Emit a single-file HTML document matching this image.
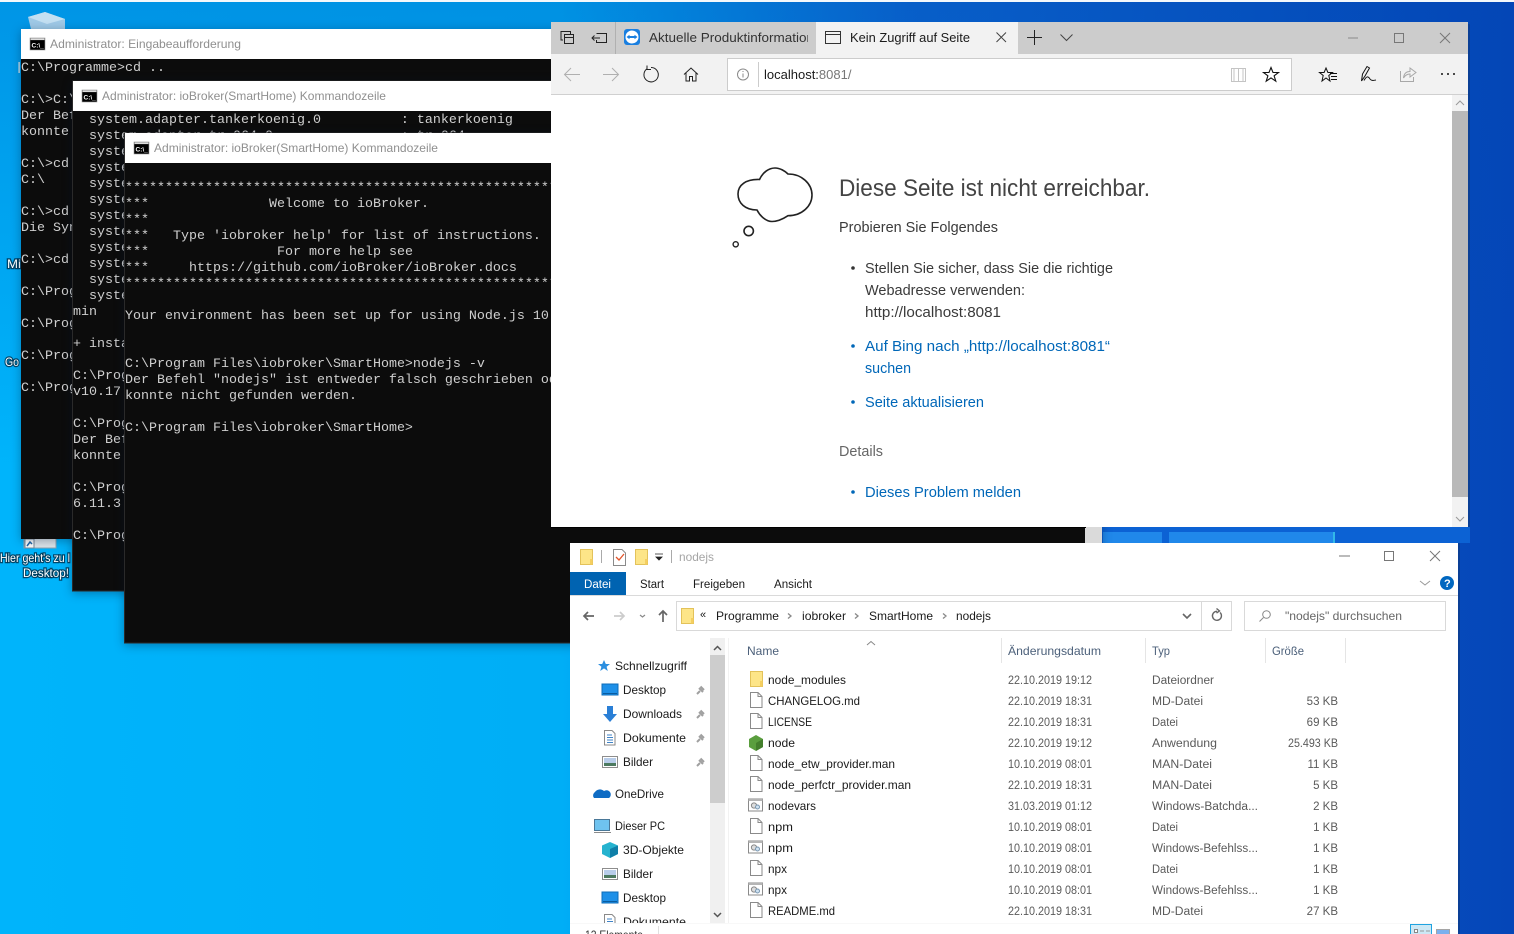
<!DOCTYPE html>
<html lang="de"><head><meta charset="utf-8"><title>Desktop</title>
<style>
html,body{margin:0;padding:0;width:1514px;height:934px;overflow:hidden;background:#0090e8}
svg{display:block}
text{font-family:"Liberation Sans",sans-serif;white-space:pre}
.m text,text.m{font-family:"Liberation Mono",monospace;font-size:13.33px;fill:#cfcfcf}
.t{font-size:12px;fill:#8f8f8f}
.f text{font-size:12px;fill:#1a1a1a}
.g text{font-size:11.5px;fill:#5a5a5a}
.p{font-size:14.6px;fill:#3a3a3a}
.l{font-size:14.6px;fill:#0067b8}
.d{font-size:12px;fill:#fff;paint-order:stroke;stroke:#00243c;stroke-width:2.5px;stroke-opacity:.75}
.i{fill:none;stroke:#333;stroke-width:1}
.sh{filter:drop-shadow(0 2px 5px rgba(0,20,50,.35))}
</style></head><body>
<svg xmlns="http://www.w3.org/2000/svg" width="1514" height="934" viewBox="0 0 1514 934">
<defs>
<linearGradient id="h" x1="0" x2="1" y1="0" y2="0"><stop offset="0" stop-color="#00b4fb"/><stop offset=".37" stop-color="#00aef6"/><stop offset=".6" stop-color="#0a68d2"/><stop offset="1" stop-color="#0546b8"/></linearGradient>
<linearGradient id="v" x1="0" x2="0" y1="0" y2="1"><stop offset="0" stop-color="#0046b0" stop-opacity=".28"/><stop offset=".5" stop-color="#0046b0" stop-opacity="0"/></linearGradient>
<g id="c"><rect x="0" y="0" width="15" height="12" fill="#000" stroke="#999" stroke-width=".6"/><rect x=".5" y=".3" width="14" height="1.8" fill="#ddd"/><text x="1.5" y="9.5" style="font-size:6.5px;fill:#fff;font-weight:bold">C:\_</text></g>
<g id="fo"><path d="M.5 .5H12.5V15.5H.5Z" fill="#fde588" stroke="#e3c25a"/><path d="M10 10H12.5V15.5H10Z" fill="#f5cf60"/></g>
<g id="fi"><path d="M.5 .5H8L12 4.5V15.5H.5Z" fill="#fff" stroke="#8a8a8a"/><path d="M8 .5V4.5H12" fill="none" stroke="#8a8a8a"/></g>
<g id="ba"><rect x=".5" y="1" width="14" height="12" fill="#fff" stroke="#8a8a8a"/><rect x=".5" y="1" width="14" height="2" fill="#b5b5b5"/><circle cx="6" cy="7.5" r="2.6" fill="#ddd" stroke="#888"/><circle cx="9.5" cy="9" r="2" fill="#cfe2f2" stroke="#7a97b0"/></g>
<g id="pin"><path d="M2 9L5 6M4 3L8 7M5.5 1.5L9 5" fill="none" stroke="#a0a0a0" stroke-width="2"/></g>
<g id="de"><rect x="0" y="1" width="16" height="11" fill="#1e90e8" stroke="#0f6db8"/><rect x="1" y="10" width="14" height="1" fill="#0a5ca0"/></g>
<g id="pi"><rect x=".5" y=".5" width="15" height="11" fill="#fff" stroke="#8d8d8d"/><rect x="2" y="2" width="12" height="5" fill="#b8cdea"/><rect x="2" y="7" width="12" height="3" fill="#4d7a60"/></g>
<g id="doc"><path d="M.5 .5H8L11 3.5V15H.5Z" fill="#fff" stroke="#8a8a8a"/><path d="M3 5H8M3 7.5H9M3 10H9M3 12.5H9" stroke="#3f83c7"/></g>
</defs>

<!-- wallpaper -->
<rect width="1514" height="934" fill="url(#h)"/>
<rect width="1514" height="934" fill="url(#v)"/>
<rect width="1514" height="2" fill="#f4f8fb"/>
<rect x="1102" y="527" width="368" height="16" fill="#0c62d4"/>
<rect x="1103" y="532" width="59" height="11" fill="#2088ea"/>
<rect x="1169" y="532" width="165" height="11" fill="#2088ea"/>
<rect x="1333" y="532" width="2" height="11" fill="#32b8e8"/>

<!-- desktop icons -->
<path d="M28 17L45 12L65 19V29H31Z" fill="#9fc9e6"/><path d="M28 17L45 12L65 19L47 24Z" fill="#c4e0f2"/>
<rect x="24" y="538" width="32" height="10" fill="#dfe6ea" stroke="#8ea3b0"/><rect x="25" y="539" width="9" height="9" fill="#fff" stroke="#7a8c9a"/><path d="M27 546l3-4 2 2" stroke="#2468a8" fill="none" stroke-width="1.5"/>
<text class="d" x="7" y="268" textLength="14" lengthAdjust="spacingAndGlyphs">Mi</text>
<text class="d" x="5" y="366" textLength="14" lengthAdjust="spacingAndGlyphs">Go</text>
<text class="d" x="0" y="562" textLength="70" lengthAdjust="spacingAndGlyphs">Hier geht's zu l</text>
<text class="d" x="23" y="577" textLength="46" lengthAdjust="spacingAndGlyphs">Desktop!</text>
<rect x="18.500" y="62" width="1.200" height="11" fill="#e8e8e8"/>

<!-- console 1 -->
<rect class="sh" x="21" y="29" width="700" height="510" fill="#0c0c0c"/><rect x="21" y="29" width="700" height="30" fill="#fff"/>
<use href="#c" x="30" y="38"/>
<text class="t" x="50" y="48" textLength="191" lengthAdjust="spacingAndGlyphs">Administrator: Eingabeaufforderung</text>
<g class="m">
<text x="21" y="71">C:\Programme&gt;cd ..</text>
<text x="21" y="103">C:\&gt;C:\Program</text>
<text x="21" y="119">Der Befehl</text>
<text x="21" y="135">konnte nicht</text>
<text x="21" y="167">C:\&gt;cd \</text>
<text x="21" y="183">C:\</text>
<text x="21" y="215">C:\&gt;cd Program</text>
<text x="21" y="231">Die Syntax</text>
<text x="21" y="263">C:\&gt;cd Program</text>
<text x="21" y="295">C:\Programme</text>
<text x="21" y="327">C:\Programme</text>
<text x="21" y="359">C:\Programme</text>
<text x="21" y="391">C:\Programme</text>
</g>

<!-- console 2 -->
<rect class="sh" x="72.5" y="81" width="700" height="510" fill="#0c0c0c" stroke="#2a2a2a"/><rect x="73" y="81" width="700" height="30" fill="#fff"/>
<use href="#c" x="82" y="90"/>
<text class="t" x="102" y="100" textLength="284" lengthAdjust="spacingAndGlyphs">Administrator: ioBroker(SmartHome) Kommandozeile</text>
<g class="m">
<text x="73" y="123">  system.adapter.tankerkoenig.0          : tankerkoenig</text>
<text x="73" y="139">  system.adapter.tr-064.0                : tr-064</text>
<text x="73" y="155">  system</text><text x="73" y="171">  system</text><text x="73" y="187">  system</text><text x="73" y="203">  system</text><text x="73" y="219">  system</text><text x="73" y="235">  system</text><text x="73" y="251">  system</text><text x="73" y="267">  system</text><text x="73" y="283">  system</text><text x="73" y="299">  system</text>
<text x="73" y="315">min</text>
<text x="73" y="347">+ instance</text>
<text x="73" y="379">C:\Program</text>
<text x="73" y="395">v10.17.0</text>
<text x="73" y="427">C:\Program</text>
<text x="73" y="443">Der Befehl</text>
<text x="73" y="459">konnte nicht</text>
<text x="73" y="491">C:\Program</text>
<text x="73" y="507">6.11.3</text>
<text x="73" y="539">C:\Program</text>
</g>

<!-- console 3 -->
<rect class="sh" x="124.5" y="133" width="977" height="510" fill="#0c0c0c" stroke="#2a2a2a"/><rect x="125" y="133" width="977" height="30" fill="#fff"/>
<rect x="1085" y="163" width="17" height="480" fill="#dadada"/>
<use href="#c" x="134" y="142"/>
<text class="t" x="154" y="152" textLength="284" lengthAdjust="spacingAndGlyphs">Administrator: ioBroker(SmartHome) Kommandozeile</text>
<g class="m">
<text x="125" y="191">****************************************************************</text>
<text x="125" y="207">***             </text><text x="269" y="207">Welcome to ioBroker.</text>
<text x="125" y="223">***</text>
<text x="125" y="239">***</text><text x="173" y="239">Type 'iobroker help' for list of instructions.</text>
<text x="125" y="255">***</text><text x="277" y="255">For more help see</text>
<text x="125" y="271">***</text><text x="189" y="271">https://github.com/ioBroker/ioBroker.docs</text>
<text x="125" y="287">****************************************************************</text>
<text x="125" y="319">Your environment has been set up for using Node.js 10.17.0 (x64)</text>
<text x="125" y="367">C:\Program Files\iobroker\SmartHome&gt;nodejs -v</text>
<text x="125" y="383">Der Befehl "nodejs" ist entweder falsch geschrieben oder</text>
<text x="125" y="399">konnte nicht gefunden werden.</text>
<text x="125" y="431">C:\Program Files\iobroker\SmartHome&gt;</text>
</g>

<!-- explorer -->
<rect x="1458" y="543" width="2" height="391" fill="#0a3f96"/>
<rect x="570" y="543" width="888" height="391" fill="#fff"/>
<use href="#fo" x="580" y="549"/>
<rect x="601" y="550" width="1" height="13" fill="#aaa"/>
<path d="M613.5 549.5H622L625.5 553V565.5H613.5Z" fill="#fff" stroke="#8a8a8a"/><path d="M616 557l3 3 5-6" fill="none" stroke="#e2552b" stroke-width="1.3"/>
<use href="#fo" x="635" y="549"/>
<path d="M655 554h8M656 557h6l-3 3z" fill="#222" stroke="#222" stroke-width=".8"/>
<rect x="671" y="550" width="1" height="13" fill="#aaa"/>
<text x="679" y="561" textLength="35" lengthAdjust="spacingAndGlyphs" style="font-size:12px;fill:#a5a5a5">nodejs</text>
<path d="M1339 556H1350" stroke="#777"/><rect x="1384.500" y="551.500" width="9" height="9" fill="none" stroke="#777"/><path d="M1430 551L1440 561M1440 551L1430 561" stroke="#777"/>
<rect x="570" y="572" width="56" height="23" fill="#0063b1"/>
<text x="584" y="588" textLength="27" lengthAdjust="spacingAndGlyphs" style="font-size:11.500px;fill:#fff">Datei</text>
<g class="f"><text x="640" y="588" textLength="24" lengthAdjust="spacingAndGlyphs" style="font-size:11.500px">Start</text><text x="693" y="588" textLength="52" lengthAdjust="spacingAndGlyphs" style="font-size:11.500px">Freigeben</text><text x="774" y="588" textLength="38" lengthAdjust="spacingAndGlyphs" style="font-size:11.500px">Ansicht</text></g>
<rect x="570" y="595" width="888" height="1" fill="#dadada"/>
<path d="M1420 581l5 4 5-4" fill="none" stroke="#999"/>
<circle cx="1447" cy="583" r="7" fill="#0067c0"/><text x="1444" y="587" style="font-size:11px;font-weight:bold;fill:#fff">?</text>
<path d="M594 616H584M588 612L584 616L588 620" fill="none" stroke="#666" stroke-width="1.700"/>
<path d="M614 616H624M620 612L624 616L620 620" fill="none" stroke="#ccc" stroke-width="1.700"/>
<path d="M640 615l2.500 2 2.500-2" fill="none" stroke="#888" stroke-width="1.200"/>
<path d="M663 622V611M659 615L663 611L667 615" fill="none" stroke="#666" stroke-width="1.700"/>
<rect x="676.500" y="601.500" width="555" height="29" fill="#fff" stroke="#d9d9d9"/><rect x="1201" y="602" width="1" height="28" fill="#d9d9d9"/>
<use href="#fo" x="681" y="608"/>
<g class="f"><text x="700" y="618" style="font-size:11px">«</text>
<text x="716" y="620" textLength="63" lengthAdjust="spacingAndGlyphs">Programme</text>
<text x="802" y="620" textLength="44" lengthAdjust="spacingAndGlyphs">iobroker</text>
<text x="869" y="620" textLength="64" lengthAdjust="spacingAndGlyphs">SmartHome</text>
<text x="956" y="620" textLength="35" lengthAdjust="spacingAndGlyphs">nodejs</text></g>
<path d="M788 613.500l3 2.500-3 2.500M855 613.500l3 2.500-3 2.500M943 613.500l3 2.500-3 2.500" fill="none" stroke="#888" stroke-width="1.300"/>
<path d="M1183 614l4 4 4-4" fill="none" stroke="#666" stroke-width="1.600"/>
<path d="M1220 612.500a4.500 4.500 0 1 1-3-1.200M1216.500 608.500l3 2.500-3 2" fill="none" stroke="#666" stroke-width="1.400"/>
<rect x="1244.500" y="601.500" width="201" height="29" fill="#fff" stroke="#d9d9d9"/>
<circle cx="1266.500" cy="614.500" r="3.800" fill="none" stroke="#888"/><path d="M1263.500 617.500L1259.500 621.500" stroke="#888"/>
<text x="1285" y="620" textLength="117" lengthAdjust="spacingAndGlyphs" style="font-size:12px;fill:#666">"nodejs" durchsuchen</text>
<path d="M867 645l4-3.500 4 3.500" fill="none" stroke="#888"/>
<text x="747" y="655" textLength="32" lengthAdjust="spacingAndGlyphs" style="font-size:12px;fill:#4c607a">Name</text><text x="1008" y="655" textLength="93" lengthAdjust="spacingAndGlyphs" style="font-size:12px;fill:#4c607a">Änderungsdatum</text><text x="1152" y="655" textLength="18" lengthAdjust="spacingAndGlyphs" style="font-size:12px;fill:#4c607a">Typ</text><text x="1272" y="655" textLength="32" lengthAdjust="spacingAndGlyphs" style="font-size:12px;fill:#4c607a">Größe</text>
<path d="M1001.500 638V663M1145.500 638V663M1265.500 638V663M1345.500 638V663" stroke="#e5e5e5"/>
<!-- nav scrollbar -->
<rect x="710" y="638" width="15" height="285" fill="#f0f0f0"/><rect x="710" y="655" width="15" height="148" fill="#cdcdcd"/>
<path d="M714 650l3.500-3.500 3.500 3.500M714 913l3.500 3.500 3.500-3.500" fill="none" stroke="#555" stroke-width="1.500"/>
<rect x="728" y="638" width="1" height="285" fill="#f2f2f2"/>
<!-- nav tree -->
<path d="M604 660l1.800 4h4.200l-3.400 2.700 1.200 4.300-3.800-2.600-3.800 2.600 1.200-4.300-3.400-2.700h4.200z" fill="#2b8fe0"/>
<use href="#de" x="602" y="683"/>
<path d="M607 706h6v8h4l-7 8-7-8h4z" fill="#2a7fd6"/>
<use href="#doc" x="604" y="730"/>
<use href="#pi" x="602" y="756"/>
<path d="M594 798a4 4 0 0 1 1-6 6 6 0 0 1 9-1 4 4 0 0 1 5 7z" fill="#0f6cc4"/>
<rect x="594.500" y="819.500" width="15" height="11" fill="#6fc3ef" stroke="#4a7898"/><rect x="594" y="832" width="17" height="1" fill="#8a8a8a"/>
<path d="M610 842l8 3.500v8.500l-8 4-8-4v-8.500z" fill="#26b3cf"/><path d="M610 849l8-3.500v8.500l-8 4z" fill="#0f7fa8"/>
<use href="#pi" x="602" y="868"/>
<use href="#de" x="602" y="891"/>
<use href="#doc" x="604" y="914"/>
<use href="#pin" x="695" y="685"/><use href="#pin" x="695" y="709"/><use href="#pin" x="695" y="733"/><use href="#pin" x="695" y="757"/>
<g class="f">
<text x="615" y="670" textLength="72" lengthAdjust="spacingAndGlyphs">Schnellzugriff</text>
<text x="623" y="694" textLength="43" lengthAdjust="spacingAndGlyphs">Desktop</text>
<text x="623" y="718" textLength="59" lengthAdjust="spacingAndGlyphs">Downloads</text>
<text x="623" y="742" textLength="63" lengthAdjust="spacingAndGlyphs">Dokumente</text>
<text x="623" y="766" textLength="30" lengthAdjust="spacingAndGlyphs">Bilder</text>
<text x="615" y="798" textLength="49" lengthAdjust="spacingAndGlyphs">OneDrive</text>
<text x="615" y="830" textLength="50" lengthAdjust="spacingAndGlyphs">Dieser PC</text>
<text x="623" y="854" textLength="61" lengthAdjust="spacingAndGlyphs">3D-Objekte</text>
<text x="623" y="878" textLength="30" lengthAdjust="spacingAndGlyphs">Bilder</text>
<text x="623" y="902" textLength="43" lengthAdjust="spacingAndGlyphs">Desktop</text>
<text x="623" y="926" textLength="63" lengthAdjust="spacingAndGlyphs">Dokumente</text>
</g>
<rect x="570" y="924" width="140" height="10" fill="#fff"/>
<rect x="570" y="923" width="888" height="1" fill="#f8f8f8"/>
<text x="585" y="939" textLength="58" lengthAdjust="spacingAndGlyphs" style="font-size:12px;fill:#333">12 Elemente</text>
<rect x="658" y="926" width="1" height="8" fill="#e0e0e0"/>
<!-- files -->
<use href="#fo" x="750" y="671"/><use href="#fi" x="750" y="692"/><use href="#fi" x="750" y="713"/>
<path d="M756 735l7 4v8l-7 4-7-4v-8z" fill="#5a9e3e"/><path d="M756 743l7-4v8l-7 4z" fill="#437f2c"/>
<use href="#fi" x="750" y="755"/><use href="#fi" x="750" y="776"/><use href="#ba" x="748" y="798"/><use href="#fi" x="750" y="818"/><use href="#ba" x="748" y="840"/><use href="#fi" x="750" y="860"/><use href="#ba" x="748" y="882"/><use href="#fi" x="750" y="902"/>
<g class="f">
<text x="768" y="684" textLength="78" lengthAdjust="spacingAndGlyphs">node_modules</text>
<text x="768" y="705" textLength="92" lengthAdjust="spacingAndGlyphs">CHANGELOG.md</text>
<text x="768" y="726" textLength="44" lengthAdjust="spacingAndGlyphs">LICENSE</text>
<text x="768" y="747" textLength="27" lengthAdjust="spacingAndGlyphs">node</text>
<text x="768" y="768" textLength="127" lengthAdjust="spacingAndGlyphs">node_etw_provider.man</text>
<text x="768" y="789" textLength="143" lengthAdjust="spacingAndGlyphs">node_perfctr_provider.man</text>
<text x="768" y="810" textLength="48" lengthAdjust="spacingAndGlyphs">nodevars</text>
<text x="768" y="831" textLength="25" lengthAdjust="spacingAndGlyphs">npm</text>
<text x="768" y="852" textLength="25" lengthAdjust="spacingAndGlyphs">npm</text>
<text x="768" y="873" textLength="19" lengthAdjust="spacingAndGlyphs">npx</text>
<text x="768" y="894" textLength="19" lengthAdjust="spacingAndGlyphs">npx</text>
<text x="768" y="915" textLength="67" lengthAdjust="spacingAndGlyphs">README.md</text>
</g>
<g class="g">
<text x="1008" y="684" textLength="84" lengthAdjust="spacingAndGlyphs">22.10.2019 19:12</text>
<text x="1008" y="705" textLength="84" lengthAdjust="spacingAndGlyphs">22.10.2019 18:31</text>
<text x="1008" y="726" textLength="84" lengthAdjust="spacingAndGlyphs">22.10.2019 18:31</text>
<text x="1008" y="747" textLength="84" lengthAdjust="spacingAndGlyphs">22.10.2019 19:12</text>
<text x="1008" y="768" textLength="84" lengthAdjust="spacingAndGlyphs">10.10.2019 08:01</text>
<text x="1008" y="789" textLength="84" lengthAdjust="spacingAndGlyphs">22.10.2019 18:31</text>
<text x="1008" y="810" textLength="84" lengthAdjust="spacingAndGlyphs">31.03.2019 01:12</text>
<text x="1008" y="831" textLength="84" lengthAdjust="spacingAndGlyphs">10.10.2019 08:01</text>
<text x="1008" y="852" textLength="84" lengthAdjust="spacingAndGlyphs">10.10.2019 08:01</text>
<text x="1008" y="873" textLength="84" lengthAdjust="spacingAndGlyphs">10.10.2019 08:01</text>
<text x="1008" y="894" textLength="84" lengthAdjust="spacingAndGlyphs">10.10.2019 08:01</text>
<text x="1008" y="915" textLength="84" lengthAdjust="spacingAndGlyphs">22.10.2019 18:31</text>
<text x="1152" y="684" textLength="62" lengthAdjust="spacingAndGlyphs">Dateiordner</text>
<text x="1152" y="705" textLength="51" lengthAdjust="spacingAndGlyphs">MD-Datei</text>
<text x="1152" y="726" textLength="26" lengthAdjust="spacingAndGlyphs">Datei</text>
<text x="1152" y="747" textLength="65" lengthAdjust="spacingAndGlyphs">Anwendung</text>
<text x="1152" y="768" textLength="60" lengthAdjust="spacingAndGlyphs">MAN-Datei</text>
<text x="1152" y="789" textLength="60" lengthAdjust="spacingAndGlyphs">MAN-Datei</text>
<text x="1152" y="810" textLength="106" lengthAdjust="spacingAndGlyphs">Windows-Batchda...</text>
<text x="1152" y="831" textLength="26" lengthAdjust="spacingAndGlyphs">Datei</text>
<text x="1152" y="852" textLength="106" lengthAdjust="spacingAndGlyphs">Windows-Befehlss...</text>
<text x="1152" y="873" textLength="26" lengthAdjust="spacingAndGlyphs">Datei</text>
<text x="1152" y="894" textLength="106" lengthAdjust="spacingAndGlyphs">Windows-Befehlss...</text>
<text x="1152" y="915" textLength="51" lengthAdjust="spacingAndGlyphs">MD-Datei</text>
</g>
<g class="g" text-anchor="end">
<text x="1338" y="705">53 KB</text><text x="1338" y="726">69 KB</text><text x="1338" y="747" textLength="50" lengthAdjust="spacingAndGlyphs">25.493 KB</text><text x="1338" y="768">11 KB</text><text x="1338" y="789">5 KB</text><text x="1338" y="810">2 KB</text><text x="1338" y="831">1 KB</text><text x="1338" y="852">1 KB</text><text x="1338" y="873">1 KB</text><text x="1338" y="894">1 KB</text><text x="1338" y="915">27 KB</text>
</g>
<rect x="1410.500" y="924.500" width="21" height="12" fill="#cce8f5" stroke="#1fa3e0"/>
<rect x="1414.500" y="929.500" width="3" height="3" fill="#fff" stroke="#888"/><path d="M1420 931h4M1426 931h4" stroke="#999"/>
<rect x="1436.500" y="929.500" width="13" height="8" fill="#7ab0ee" stroke="#a5a5a5"/>

<!-- browser -->
<rect x="1468" y="24" width="2" height="503" fill="#0a3f96"/>
<rect x="551" y="22" width="917" height="505" fill="#fff"/>
<rect x="551" y="527" width="535" height="1" fill="#000"/>
<rect x="551" y="22" width="917" height="32" fill="#cccccc"/>
<rect x="816" y="22" width="202" height="32" fill="#f2f2f2"/>
<rect x="615" y="22" width="1" height="32" fill="#b0b0b0"/>
<rect x="551" y="54" width="917" height="40" fill="#f2f2f2"/>
<rect x="551" y="94" width="917" height="1" fill="#d0d0d0"/>
<!-- tab bar icons -->
<path d="M561 34V31.500H570.500V34M561 31.500V40H563" class="i" style="stroke:#222"/><rect x="564.500" y="34.500" width="9" height="9" fill="none" stroke="#222"/><path d="M564.500 37.500H573.500" stroke="#222"/>
<path d="M596.500 33.500H606.500V42.500H596.500V40M592 38H600M594.500 35.500L592 38L594.500 40.500" class="i" style="stroke:#222"/>
<rect x="624" y="29" width="16" height="16" rx="3" fill="#1a7fe0"/><circle cx="632" cy="37" r="6.500" fill="#fff"/><path d="M626.500 37l3-2.200v1.200h5v-1.200l3 2.200-3 2.200v-1.200h-5v1.200z" fill="#1a7fe0"/>
<svg x="649" y="28" width="159" height="20"><text x="0" y="14" textLength="165" lengthAdjust="spacingAndGlyphs" style="font-size:13px;fill:#333">Aktuelle Produktinformation</text></svg>
<rect x="825.500" y="31.500" width="15" height="12" fill="none" stroke="#333"/><path d="M825.500 34.500H840.500" stroke="#333"/>
<text x="850" y="42" textLength="120" lengthAdjust="spacingAndGlyphs" style="font-size:13px;fill:#1a1a1a">Kein Zugriff auf Seite</text>
<path d="M996.500 32.500L1006 42M1006 32.500L996.500 42" stroke="#444"/>
<path d="M1034.500 30V45M1027 37.500H1042" stroke="#222"/>
<path d="M1060.500 34.500L1066.500 40.500L1072.500 34.500" fill="none" stroke="#444"/>
<path d="M1348 38H1358" stroke="#8a8a8a"/><rect x="1394.500" y="33.500" width="9" height="9" fill="none" stroke="#777"/><path d="M1440 33L1450 43M1450 33L1440 43" stroke="#777"/>
<!-- toolbar -->
<path d="M580 74.500H564.500M571 68L564.500 74.500L571 81" fill="none" stroke="#b0b0b0"/>
<path d="M603 74.500H618.500M612 68L618.500 74.500L612 81" fill="none" stroke="#b0b0b0"/>
<path d="M647 68.800A7.200 7.200 0 1 0 651 67.500M647 65.500V69.500H651" fill="none" stroke="#222"/>
<path d="M684 74.500L691 68L698 74.500M686 73V81H689.500V76.500H692.500V81H696V73" fill="none" stroke="#222"/>
<rect x="727.500" y="58.500" width="564" height="32" fill="#fff" stroke="#ccc"/>
<circle cx="743" cy="74.500" r="5.500" fill="none" stroke="#8a8a8a"/><path d="M743 73.500V77.500M743 71V72" stroke="#8a8a8a"/>
<rect x="758" y="62" width="1" height="25" fill="#ccc"/>
<text x="764" y="79" style="font-size:13px"><tspan fill="#1a1a1a">localhost:</tspan><tspan fill="#777">8081/</tspan></text>
<path d="M1231.500 68.500H1245.500V81.500H1231.500ZM1238.500 68.500V81.500M1234 68.500V81.500M1243 68.500V81.500" fill="none" stroke="#c4c4c4"/>
<path d="M1271 67.500l2 5h5.500l-4.400 3.300 1.700 5.400-4.800-3.300-4.800 3.300 1.700-5.400-4.400-3.300h5.500z" fill="none" stroke="#111" stroke-width="1.100"/>
<path d="M1326 68l1.900 4.500h4.600l-3.700 3 1.200 5.500-4-3-4 3 1.200-5.500-3.700-3h4.600z" fill="none" stroke="#111"/>
<path d="M1330 73.500H1337M1331 76.500H1337M1331 79.500H1337" stroke="#111"/>
<path d="M1361.500 81L1362.500 74L1367 66.500L1369.500 68L1365 76ZM1364 80.500C1366.500 76 1368 76 1370 79C1371.500 81 1373.500 80.500 1376 80" fill="none" stroke="#111"/>
<path d="M1400.500 71V81.500H1413.500V77M1403.500 78C1404 73 1407 71.500 1410 71.500V68L1416 72.500L1410 77V74C1407.500 74 1405 75.500 1403.500 78Z" fill="none" stroke="#a8a8a8"/>
<path d="M1441 74h2M1447 74h2M1453 74h2" stroke="#111" stroke-width="1.600"/>
<!-- scrollbar -->
<rect x="1452" y="95" width="16" height="432" fill="#f2f2f2"/>
<rect x="1452" y="111" width="16" height="386" fill="#b9b9b9"/>
<path d="M1456 105l4-4 4 4M1456 517l4 4 4-4" fill="none" stroke="#999"/>
<!-- page content -->
<path d="M759.500 179.500C763 172 769 168 775 168C780 168 785 171 788 174C802 174 812 184 812 195C812 206 802 215.700 788 215.700C783 219 777 221.500 772 221.500C766 221.500 760 216 757 210C745 210 738 203 738 194C738 185 746 179 759.500 179.500Z" fill="#fff" stroke="#222" stroke-width="1.600"/>
<circle cx="748.700" cy="231" r="4.700" fill="none" stroke="#222" stroke-width="1.600"/>
<circle cx="735.700" cy="244.300" r="2.600" fill="none" stroke="#222" stroke-width="1.400"/>
<text x="839" y="196" textLength="311" lengthAdjust="spacingAndGlyphs" style="font-size:24px;fill:#444">Diese Seite ist nicht erreichbar.</text>
<text class="p" x="839" y="232" textLength="159" lengthAdjust="spacingAndGlyphs">Probieren Sie Folgendes</text>
<circle cx="853" cy="268" r="1.800" fill="#333"/><circle cx="853" cy="346" r="1.800" fill="#0067b8"/><circle cx="853" cy="402" r="1.800" fill="#0067b8"/><circle cx="853" cy="492" r="1.800" fill="#0067b8"/>
<text class="p" x="865" y="273" textLength="248" lengthAdjust="spacingAndGlyphs">Stellen Sie sicher, dass Sie die richtige</text>
<text class="p" x="865" y="295" textLength="160" lengthAdjust="spacingAndGlyphs">Webadresse verwenden:</text>
<text class="p" x="865" y="317" textLength="136" lengthAdjust="spacingAndGlyphs">http://localhost:8081</text>
<text class="l" x="865" y="351" textLength="245" lengthAdjust="spacingAndGlyphs">Auf Bing nach „http://localhost:8081“</text>
<text class="l" x="865" y="373" textLength="46" lengthAdjust="spacingAndGlyphs">suchen</text>
<text class="l" x="865" y="407" textLength="119" lengthAdjust="spacingAndGlyphs">Seite aktualisieren</text>
<text class="p" x="839" y="456" textLength="44" lengthAdjust="spacingAndGlyphs" style="fill:#666">Details</text>
<text class="l" x="865" y="497" textLength="156" lengthAdjust="spacingAndGlyphs">Dieses Problem melden</text>
</svg>
</body></html>
